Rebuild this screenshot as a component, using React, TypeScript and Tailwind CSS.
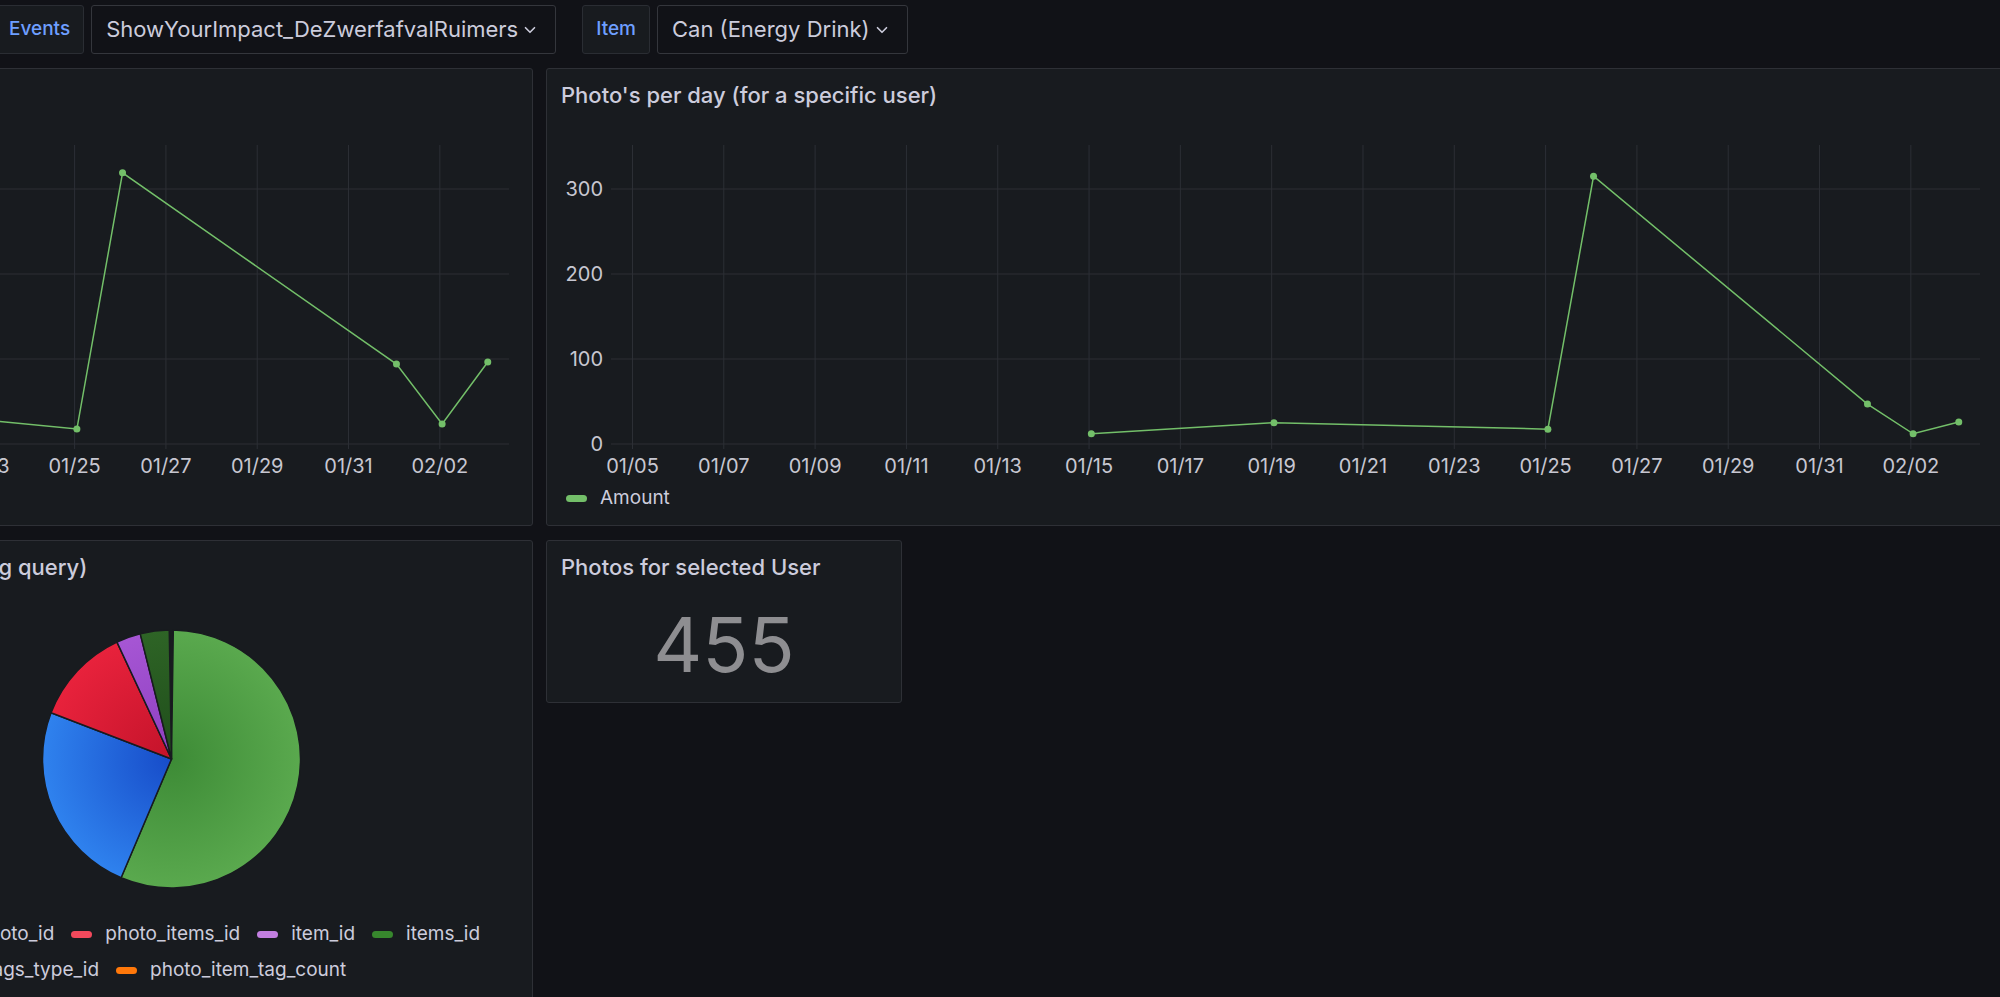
import { ChevronDown } from "lucide-react";

// chart geometry, in panel-local pixels
const DAY0 = 85.5;
const DAYW = 45.655;
const ZERO = 323;
const UNIT = 0.85;

const xAt = (d: number) => DAY0 + d * DAYW;
const yAt = (v: number) => ZERO - v * UNIT;

const dayLabel = (d: number) => {
  const date = new Date(2024, 0, 5 + d);
  const mm = String(date.getMonth() + 1).padStart(2, "0");
  const dd = String(date.getDate()).padStart(2, "0");
  return `${mm}/${dd}`;
};

const ticks = Array.from({ length: 15 }, (_, i) => i * 2);

const overallSeries: [number, number][] = [
  [0.05, 20],
  [3.05, 35],
  [8.05, 22],
  [10.05, 30],
  [14.05, 45],
  [18.05, 28],
  [20.05, 17.6],
  [21.05, 319],
  [27.05, 94],
  [28.05, 23.5],
  [29.05, 96.5],
];

const userSeries: [number, number][] = [
  [10.05, 12],
  [14.05, 25],
  [20.05, 17.5],
  [21.05, 315],
  [27.05, 47],
  [28.05, 12],
  [29.05, 26],
];

function Variable({ label, value }: { label: string; value: string }) {
  return (
    <div className="flex items-center gap-[7px]">
      <div className="flex h-[49px] items-center rounded-[3px] border border-[#2a2d33] bg-[#181b1f] px-[13px] text-[19px] font-medium text-[#6e9fff]">
        {label}
      </div>
      <div className="flex h-[49px] items-center gap-[3px] rounded-[3px] border border-[#34363c] bg-[#111217] pl-[14px] pr-[16px] text-[22px] text-[#ccccdc]">
        <span>{value}</span>
        <ChevronDown size={18} strokeWidth={2.2} className="text-[#ccccdc]" />
      </div>
    </div>
  );
}

function Panel({
  title,
  className,
  titleClass = "px-[14px]",
  children,
}: {
  title: string;
  className: string;
  titleClass?: string;
  children?: React.ReactNode;
}) {
  return (
    <div
      className={`flex shrink-0 flex-col overflow-hidden rounded-[3px] border border-[#2e3036] bg-[#181b1f] ${className}`}
    >
      <div
        className={`flex h-[52px] shrink-0 items-center text-[22px] font-medium whitespace-nowrap text-[#ccccdc] ${titleClass}`}
      >
        {title}
      </div>
      {children}
    </div>
  );
}

function TimeSeries({ data }: { data: [number, number][] }) {
  const pts = data.map(([d, v]) => `${xAt(d)},${yAt(v)}`).join(" ");
  return (
    <>
      <svg width={1458} height={366} className="block shrink-0">
        {[0, 100, 200, 300].map((v) => (
          <g key={v}>
            <line x1={64} x2={1433} y1={yAt(v)} y2={yAt(v)} stroke="#2c2f35" strokeWidth={1} />
            <text
              x={56}
              y={yAt(v)}
              textAnchor="end"
              dominantBaseline="central"
              fontSize={20}
              fill="#c7c7d1"
            >
              {v}
            </text>
          </g>
        ))}
        {ticks.map((d) => (
          <g key={d}>
            <line x1={xAt(d)} x2={xAt(d)} y1={24} y2={ZERO + 5} stroke="#2c2f35" strokeWidth={1} />
            <text
              x={xAt(d)}
              y={345}
              textAnchor="middle"
              dominantBaseline="central"
              fontSize={20}
              fill="#c7c7d1"
            >
              {dayLabel(d)}
            </text>
          </g>
        ))}
        <polyline points={pts} fill="none" stroke="#73bf69" strokeWidth={1.5} />
        {data.map(([d, v]) => (
          <circle key={d} cx={xAt(d)} cy={yAt(v)} r={3.5} fill="#73bf69" />
        ))}
      </svg>
      <div className="flex h-[22px] items-center gap-[13px] pl-[19px] text-[19px] text-[#ccccdc]">
        <span className="h-[7px] w-[21px] rounded-full bg-[#73bf69]" />
        <span>Amount</span>
      </div>
    </>
  );
}

const CX = 362.5;
const CY = 166;
const R = 129;

function slicePath(a0: number, a1: number) {
  const p = (a: number) => {
    const r = (a * Math.PI) / 180;
    return `${CX + R * Math.sin(r)} ${CY - R * Math.cos(r)}`;
  };
  const large = a1 - a0 > 180 ? 1 : 0;
  return `M ${CX} ${CY} L ${p(a0)} A ${R} ${R} 0 ${large} 1 ${p(a1)} Z`;
}

const slices = [
  { id: "g", a0: 0.8, a1: 203, inner: "#3d8b36", outer: "#5aa94e" },
  { id: "b", a0: 203, a1: 291, inner: "#174cc9", outer: "#2f82ee" },
  { id: "r", a0: 291, a1: 335, inner: "#c4132a", outer: "#e8223c" },
  { id: "p", a0: 335, a1: 346, inner: "#8e3fc0", outer: "#a656d4" },
  { id: "d", a0: 346, a1: 359, inner: "#1f4d1a", outer: "#2e6426" },
];

function Pie() {
  return (
    <svg width={725} height={323} className="block shrink-0">
      <defs>
        {slices.map((s) => (
          <radialGradient key={s.id} id={`pie-${s.id}`} cx={CX} cy={CY} r={R} gradientUnits="userSpaceOnUse">
            <stop offset="0" stopColor={s.inner} />
            <stop offset="1" stopColor={s.outer} />
          </radialGradient>
        ))}
      </defs>
      {slices.map((s) => (
        <path
          key={s.id}
          d={slicePath(s.a0, s.a1)}
          fill={`url(#pie-${s.id})`}
          stroke="#181b1f"
          strokeWidth={1.5}
          strokeLinejoin="round"
        />
      ))}
    </svg>
  );
}

function LegendItem({ color, name }: { color: string; name: string }) {
  return (
    <div className="flex items-center gap-[13px] whitespace-nowrap">
      <span className={`h-[7px] w-[21px] rounded-full ${color}`} />
      <span>{name}</span>
    </div>
  );
}

export default function App() {
  return (
    <div className="h-[997px] w-[2000px] overflow-hidden bg-[#111217] font-['Inter',sans-serif] text-[#ccccdc]">
      <div className="-ml-[5px] mt-[5px] flex h-[49px] items-center gap-[26px]">
        <Variable label="Events" value="ShowYourImpact_DeZwerfafvalRuimers" />
        <Variable label="Item" value="Can (Energy Drink)" />
      </div>

      <div className="-ml-[925px] mt-[14px] flex flex-col gap-[14px]">
        <div className="flex gap-[13px]">
          <Panel title="Photo's per day" className="h-[458px] w-[1458px]">
            <TimeSeries data={overallSeries} />
          </Panel>
          <Panel title="Photo's per day (for a specific user)" className="h-[458px] w-[1458px]">
            <TimeSeries data={userSeries} />
          </Panel>
        </div>

        <div className="flex items-start gap-[13px]">
          <div className="w-[720px] shrink-0" />
          <Panel
            title="Photo tags (using query)"
            titleClass="pl-[19px] pr-[14px]"
            className="h-[480px] w-[725px]"
          >
            <Pie />
            <div className="flex flex-col text-[19px] text-[#ccccdc]">
              <div className="flex h-[36px] items-center gap-[17px] pl-[18px]">
                <LegendItem color="bg-[#5794f2]" name="user_id" />
                <LegendItem color="bg-[#8ab8ff]" name="photo_id" />
                <LegendItem color="bg-[#f2495c]" name="photo_items_id" />
                <LegendItem color="bg-[#c27fe0]" name="item_id" />
                <LegendItem color="bg-[#37872d]" name="items_id" />
              </div>
              <div className="flex h-[36px] items-center gap-[17px] pl-[28px]">
                <LegendItem color="bg-[#fade2a]" name="tags_id" />
                <LegendItem color="bg-[#19730e]" name="tags_type_id" />
                <LegendItem color="bg-[#ff780a]" name="photo_item_tag_count" />
              </div>
            </div>
          </Panel>
          <Panel title="Photos for selected User" className="h-[163px] w-[356px]">
            <div className="flex flex-1 items-center justify-center pb-[7px] text-[76px] leading-none text-[#8e8e91]">
              455
            </div>
          </Panel>
        </div>
      </div>
    </div>
  );
}
